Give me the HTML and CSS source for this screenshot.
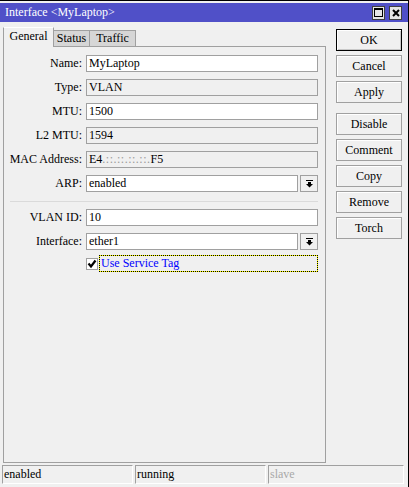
FILE: index.html
```html
<!DOCTYPE html>
<html>
<head>
<meta charset="utf-8">
<title>Interface &lt;MyLaptop&gt;</title>
<link rel="stylesheet" href="styles.css">
</head>
<body>
<div class="win">
  <div class="titlebar">
    <span class="title">Interface &lt;MyLaptop&gt;</span>
    <div class="tbtns">
      <span class="tbtn"><svg width="9" height="9" viewBox="0 0 9 9"><rect x="0.5" y="0.5" width="8" height="8" fill="none" stroke="#000" stroke-width="1"/><rect x="0" y="0" width="9" height="2" fill="#000"/></svg></span>
      <span class="tbtn"><svg width="8" height="8" viewBox="0 0 8 8"><path d="M1 1 L7 7 M7 1 L1 7" stroke="#000" stroke-width="2" fill="none"/></svg></span>
    </div>
  </div>
  <div class="main">
    <div class="left">
      <div class="tabs">
        <div class="tab active">General</div>
        <div class="tab status">Status</div>
        <div class="tab traffic">Traffic</div>
      </div>
      <div class="panel">
        <div class="form">
          <label class="lbl">Name:</label>
          <div class="field">MyLaptop</div>
          <label class="lbl">Type:</label>
          <div class="field ro">VLAN</div>
          <label class="lbl">MTU:</label>
          <div class="field">1500</div>
          <label class="lbl">L2 MTU:</label>
          <div class="field ro">1594</div>
          <label class="lbl">MAC Address:</label>
          <div class="field ro">E4<span class="blur">.::.::.::.::.</span>F5</div>
          <label class="lbl">ARP:</label>
          <div class="combo"><div class="field">enabled</div><span class="drop"><svg width="7" height="8" viewBox="0 0 7 8"><rect x="0" y="0" width="7" height="1" fill="#000"/><rect x="2" y="2" width="3" height="2" fill="#000"/><polygon points="0,4 7,4 3.5,7.5" fill="#000"/></svg></span></div>
          <div class="sep"></div>
          <label class="lbl">VLAN ID:</label>
          <div class="field">10</div>
          <label class="lbl">Interface:</label>
          <div class="combo"><div class="field">ether1</div><span class="drop"><svg width="7" height="8" viewBox="0 0 7 8"><rect x="0" y="0" width="7" height="1" fill="#000"/><rect x="2" y="2" width="3" height="2" fill="#000"/><polygon points="0,4 7,4 3.5,7.5" fill="#000"/></svg></span></div>
          <div class="checkrow">
            <span class="check"><svg width="10" height="10" viewBox="0 0 10 10"><path d="M1.5 4.5 L4 7.5 L8.5 1.5" stroke="#000" stroke-width="2.2" fill="none"/></svg></span>
            <span class="checklabel">Use Service Tag</span>
          </div>
        </div>
      </div>
    </div>
    <div class="buttons">
      <div class="btn default">OK</div>
      <div class="btn">Cancel</div>
      <div class="btn apply">Apply</div>
      <div class="btn">Disable</div>
      <div class="btn">Comment</div>
      <div class="btn">Copy</div>
      <div class="btn">Remove</div>
      <div class="btn">Torch</div>
    </div>
  </div>
  <div class="statusbar">
    <div class="cell c1">enabled</div>
    <div class="cell c2">running</div>
    <div class="cell c3 dim">slave</div>
  </div>
</div>
</body>
</html>
```
FILE: styles.css
```css
* { box-sizing: border-box; }
body {
  margin: 0;
  font-family: "Liberation Serif", "Times New Roman", serif;
  font-size: 12px;
  color: #000;
  background: #f0f0f0;
}
.win {
  width: 409px;
  height: 487px;
  border-top: 1px solid #000;
  border-right: 1px solid #000;
  background: #f0f0f0;
  display: flex;
  flex-direction: column;
}
.titlebar {
  margin-top: 2px;
  height: 19px;
  background: #5050c8;
  color: #fff;
  display: flex;
  align-items: center;
  justify-content: space-between;
  padding: 0 6px 0 5px;
}
.title { line-height: 19px; }
.tbtns { display: flex; gap: 4px; }
.tbtn {
  width: 13px;
  height: 14px;
  background: #e6e6e6;
  border: 1px solid #404040;
  display: flex;
  align-items: center;
  justify-content: center;
}
.main {
  display: flex;
  height: 441px;
}
.left {
  margin-left: 3px;
  width: 323px;
  padding-top: 5px;
  display: flex;
  flex-direction: column;
}
.tabs {
  display: flex;
  align-items: flex-end;
  height: 20px;
  border-bottom: 1px solid #a0a0a0;
}
.tab {
  height: 16px;
  background: #d6d6d6;
  border-top: 1px solid #a0a0a0;
  border-right: 1px solid #a0a0a0;
  text-align: center;
  line-height: 15px;
}
.tab.active {
  width: 51px;
  height: 20px;
  margin-bottom: -1px;
  background: #f0f0f0;
  border-left: 1px solid #a0a0a0;
  border-top: 1px solid #ffffff;
  line-height: 16px;
}
.tab.status { width: 36px; }
.tab.traffic { width: 46px; }
.panel {
  flex: 1;
  border: 1px solid #a0a0a0;
  border-top: none;
  padding: 8px 7px 0 0;
}
.form {
  display: grid;
  grid-template-columns: 78px 232px;
  grid-auto-rows: auto;
  column-gap: 4px;
  row-gap: 7px;
}
.lbl {
  text-align: right;
  line-height: 17px;
  height: 17px;
  white-space: nowrap;
}
.field {
  height: 17px;
  background: #fff;
  border: 1px solid #a0a0a0;
  padding-left: 2px;
  line-height: 15px;
  white-space: nowrap;
  overflow: hidden;
}
.field.ro { background: #f0f0f0; }
.blur { color: #9a9a9a; letter-spacing: 0.5px; }
.combo {
  display: flex;
  gap: 2px;
}
.combo .field { flex: 1; }
.drop {
  width: 18px;
  height: 17px;
  background: #f0f0f0;
  border: 1px solid #a0a0a0;
  display: flex;
  align-items: center;
  justify-content: center;
}
.sep {
  grid-column: 1 / -1;
  height: 1px;
  margin: 2px 0 0 6px;
  background: #dadada;
}
.checkrow {
  grid-column: 2;
  margin-top: -2px;
  height: 17px;
  display: flex;
  align-items: center;
  gap: 1px;
}
.check {
  width: 12px;
  height: 12px;
  background: #fff;
  border: 1px solid #a0a0a0;
  display: flex;
  align-items: center;
  justify-content: center;
}
.checklabel {
  flex: 1;
  height: 17px;
  border: 1px solid #ffff00;
  outline: 1px dotted #000;
  outline-offset: -1px;
  color: #0000ff;
  padding-left: 1px;
  line-height: 15px;
}
.buttons {
  margin-left: 10px;
  width: 66px;
  padding-top: 7px;
  display: flex;
  flex-direction: column;
  gap: 4px;
}
.btn {
  height: 22px;
  background: #f0f0f0;
  border: 1px solid #a0a0a0;
  box-shadow: inset 1px 1px 0 #ffffff;
  text-align: center;
  line-height: 20px;
}
.btn.default { border-color: #000; box-shadow: inset 1px 1px 0 #fff, inset -1px -1px 0 #c8c8c8; }
.btn.apply { margin-bottom: 6px; }
.statusbar {
  margin-top: 2px;
  height: 19px;
  display: flex;
  gap: 2px;
  padding-left: 2px;
}
.cell {
  height: 19px;
  border-top: 1px solid #a0a0a0;
  border-left: 1px solid #a0a0a0;
  border-right: 1px solid #ffffff;
  border-bottom: 1px solid #ffffff;
  padding-left: 1px;
  line-height: 17px;
}
.c1, .c2 { width: 131px; }
.c3 { width: 136px; }
.dim { color: #a8a8a8; }
```
